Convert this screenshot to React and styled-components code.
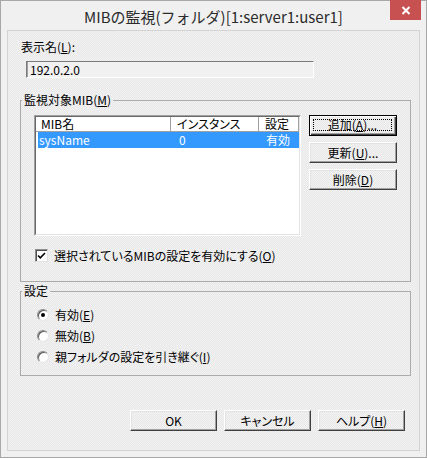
import React from "react";
import styled, { createGlobalStyle, css } from "styled-components";

const GlobalStyle = createGlobalStyle`
  html, body { margin: 0; padding: 0; background: #ffffff; }
  #root { width: 427px; height: 458px; }
  * { box-sizing: border-box; }
`;

const dither = css`
  background-color: #eeeeee;
  background-image: repeating-conic-gradient(#f3f3f3 0 25%, #e7e7e7 0 50%);
  background-size: 2px 2px;
`;

const Window = styled.div`
  width: 427px;
  height: 458px;
  border: 1px solid #a8a8a8;
  background: #f0f0f0;
  display: flex;
  flex-direction: column;
  font-family: "Noto Sans CJK JP", "Noto Sans", sans-serif;
`;

const TitleBar = styled.div`
  height: 29px;
  display: grid;
  grid-template-columns: 1fr auto 1fr;
  align-items: center;
`;

const Title = styled.div`
  grid-column: 2;
  font-size: 15px;
  color: #2b2b2b;
  line-height: 29px;
  padding-top: 1px;
  white-space: nowrap;
`;

const CloseButton = styled.div`
  grid-column: 3;
  justify-self: end;
  align-self: start;
  margin-top: -1px;
  margin-right: 5px;
  width: 31px;
  height: 20px;
  background: #c75050;
  display: flex;
  align-items: center;
  justify-content: center;
`;

const Frame = styled.div`
  flex: 1;
  padding: 0 6px 6px 6px;
  display: flex;
`;

const Client = styled.div`
  flex: 1;
  border: 1px solid #d3d3d3;
  ${dither}
  padding: 9px 8px 0 12px;
  display: flex;
  flex-direction: column;
  font-size: 12px;
  color: #000;
  font-feature-settings: "palt";
`;

const FieldLabel = styled.div`
  margin-left: 1px;
  line-height: 14px;
  height: 14px;
`;

const TextBox = styled.div`
  margin: 7px 0 0 6px;
  width: 288px;
  height: 17px;
  border: 1px solid;
  border-color: #7a7a7a #ffffff #ffffff #7a7a7a;
  box-shadow: inset 1px 0 0 #a0a0a0;
  background: #f1f1f1;
  padding-left: 3px;
  line-height: 15px;
  font-size: 12px;
`;

const Group = styled.fieldset`
  margin: ${(p) => p.$top}px 0 0 0;
  padding: 0;
  min-width: 0;
  border: 1px solid #ababab;
`;

const Legend = styled.legend`
  margin-left: 1px;
  padding: 0 2px;
  line-height: 14px;
  font-size: 12px;
`;

const GroupBody = styled.div`
  padding: ${(p) => p.$pad};
  display: flex;
  flex-direction: column;
`;

const ListArea = styled.div`
  display: flex;
  gap: 8px;
  align-items: flex-start;
`;

const ListView = styled.div`
  width: 267px;
  height: 121px;
  border: 1px solid;
  border-color: #a0a0a0 #ffffff #ffffff #a0a0a0;
  display: flex;
`;

const ListInner = styled.div`
  flex: 1;
  border: 1px solid;
  border-color: #696969 #e3e3e3 #e3e3e3 #696969;
  background: #ffffff;
  display: flex;
  flex-direction: column;
`;

const HeaderRow = styled.div`
  display: grid;
  grid-template-columns: 135px 88px 40px;
  height: 15px;
  border-bottom: 1px solid #a0a0a0;
`;

const HeaderCell = styled.div`
  border-right: 1px solid #a0a0a0;
  padding-left: ${(p) => p.$pad}px;
  line-height: 14px;
  white-space: nowrap;
`;

const DataRow = styled.div`
  display: grid;
  grid-template-columns: 133px 88px 40px;
  margin-left: 2px;
  height: 16px;
  background: ${(p) => (p.$selected ? "#3399ff" : "transparent")};
  color: ${(p) => (p.$selected ? "#ffffff" : "#000000")};
`;

const DataCell = styled.div`
  padding-left: ${(p) => p.$pad}px;
  line-height: 16px;
  white-space: nowrap;
`;

const ButtonColumn = styled.div`
  display: flex;
  flex-direction: column;
  gap: 6px;
`;

const Button = styled.div`
  width: ${(p) => p.$w}px;
  height: 21px;
  display: flex;
  align-items: center;
  justify-content: center;
  ${dither}
  border: 1px solid;
  border-color: ${(p) =>
    p.$default ? "#000000" : "#ffffff #404040 #404040 #ffffff"};
  box-shadow: ${(p) =>
    p.$default
      ? "inset 1px 1px 0 #ffffff, inset -1px -1px 0 #404040, inset -2px -2px 0 #a0a0a0"
      : "inset -1px -1px 0 #a0a0a0, inset 1px 1px 0 #e3e3e3"};
  line-height: 14px;
  white-space: nowrap;
`;

const FocusRing = styled.span`
  flex: 1;
  align-self: stretch;
  margin: 3px 4px 4px 3px;
  border: 1px dotted #000000;
  display: flex;
  align-items: center;
  justify-content: center;
`;

const CheckRow = styled.div`
  margin: 13px 0 0 1px;
  display: flex;
  align-items: center;
  gap: 6px;
  height: 13px;
  line-height: 14px;
`;

const CheckBox = styled.span`
  width: 13px;
  height: 13px;
  flex: none;
  border: 1px solid;
  border-color: #8e8e8e #e3e3e3 #e3e3e3 #8e8e8e;
  background: #ffffff;
  box-shadow: inset 1px 1px 0 #505050;
  display: flex;
  align-items: center;
  justify-content: center;
`;

const RadioRow = styled.div`
  height: 21px;
  display: flex;
  align-items: center;
  gap: 6px;
  line-height: 14px;
`;

const Radio = styled.span`
  width: 12px;
  height: 12px;
  flex: none;
  border-radius: 50%;
  background: #ffffff;
  border: 1px solid;
  border-color: #8a8a8a #e6e6e6 #e6e6e6 #8a8a8a;
  box-shadow: inset 1px 1px 0 #5a5a5a;
  display: flex;
  align-items: center;
  justify-content: center;
`;

const Dot = styled.span`
  width: 4px;
  height: 4px;
  border-radius: 50%;
  background: #000000;
`;

const ButtonRow = styled.div`
  margin-top: 34px;
  padding-right: 6px;
  display: flex;
  justify-content: flex-end;
  gap: 7px;
`;

const U = styled.span`
  text-decoration: underline;
  text-underline-offset: 1px;
`;

export default function App() {
  return (
    <>
      <GlobalStyle />
      <Window>
        <TitleBar>
          <Title>MIBの監視(フォルダ)[1:server1:user1]</Title>
          <CloseButton>
            <svg width="10" height="9" viewBox="0 0 10 9">
              <path d="M1.5 1 L8.5 8 M8.5 1 L1.5 8" stroke="#ffffff" strokeWidth="2" />
            </svg>
          </CloseButton>
        </TitleBar>
        <Frame>
          <Client>
            <FieldLabel>
              表示名(<U>L</U>):
            </FieldLabel>
            <TextBox>192.0.2.0</TextBox>

            <Group $top={15}>
              <Legend>
                監視対象MIB(<U>M</U>)
              </Legend>
              <GroupBody $pad="8px 13px 19px 13px">
                <ListArea>
                  <ListView>
                    <ListInner>
                      <HeaderRow>
                        <HeaderCell $pad={5}>MIB名</HeaderCell>
                        <HeaderCell $pad={6}>インスタンス</HeaderCell>
                        <HeaderCell $pad={6}>設定</HeaderCell>
                      </HeaderRow>
                      <DataRow $selected>
                        <DataCell $pad={1}>sysName</DataCell>
                        <DataCell $pad={8}>0</DataCell>
                        <DataCell $pad={7}>有効</DataCell>
                      </DataRow>
                    </ListInner>
                  </ListView>
                  <ButtonColumn>
                    <Button $w={88} $default>
                      <FocusRing>
                        追加(<U>A</U>)...
                      </FocusRing>
                    </Button>
                    <Button $w={88}>
                      更新(<U>U</U>)...
                    </Button>
                    <Button $w={88}>
                      削除(<U>D</U>)
                    </Button>
                  </ButtonColumn>
                </ListArea>
                <CheckRow>
                  <CheckBox>
                    <svg width="9" height="9" viewBox="0 0 9 9">
                      <path d="M1 4.5 L3.3 6.8 L8 2" stroke="#000" strokeWidth="1.6" fill="none" />
                    </svg>
                  </CheckBox>
                  <span>
                    選択されているMIBの設定を有効にする(<U>O</U>)
                  </span>
                </CheckRow>
              </GroupBody>
            </Group>

            <Group $top={2}>
              <Legend>設定</Legend>
              <GroupBody $pad="6px 0 8px 16px">
                <RadioRow>
                  <Radio>
                    <Dot />
                  </Radio>
                  <span>
                    有効(<U>E</U>)
                  </span>
                </RadioRow>
                <RadioRow>
                  <Radio />
                  <span>
                    無効(<U>B</U>)
                  </span>
                </RadioRow>
                <RadioRow>
                  <Radio />
                  <span>
                    親フォルダの設定を引き継ぐ(<U>I</U>)
                  </span>
                </RadioRow>
              </GroupBody>
            </Group>

            <ButtonRow>
              <Button $w={87}>OK</Button>
              <Button $w={87}>キャンセル</Button>
              <Button $w={87}>
                ヘルプ(<U>H</U>)
              </Button>
            </ButtonRow>
          </Client>
        </Frame>
      </Window>
    </>
  );
}
